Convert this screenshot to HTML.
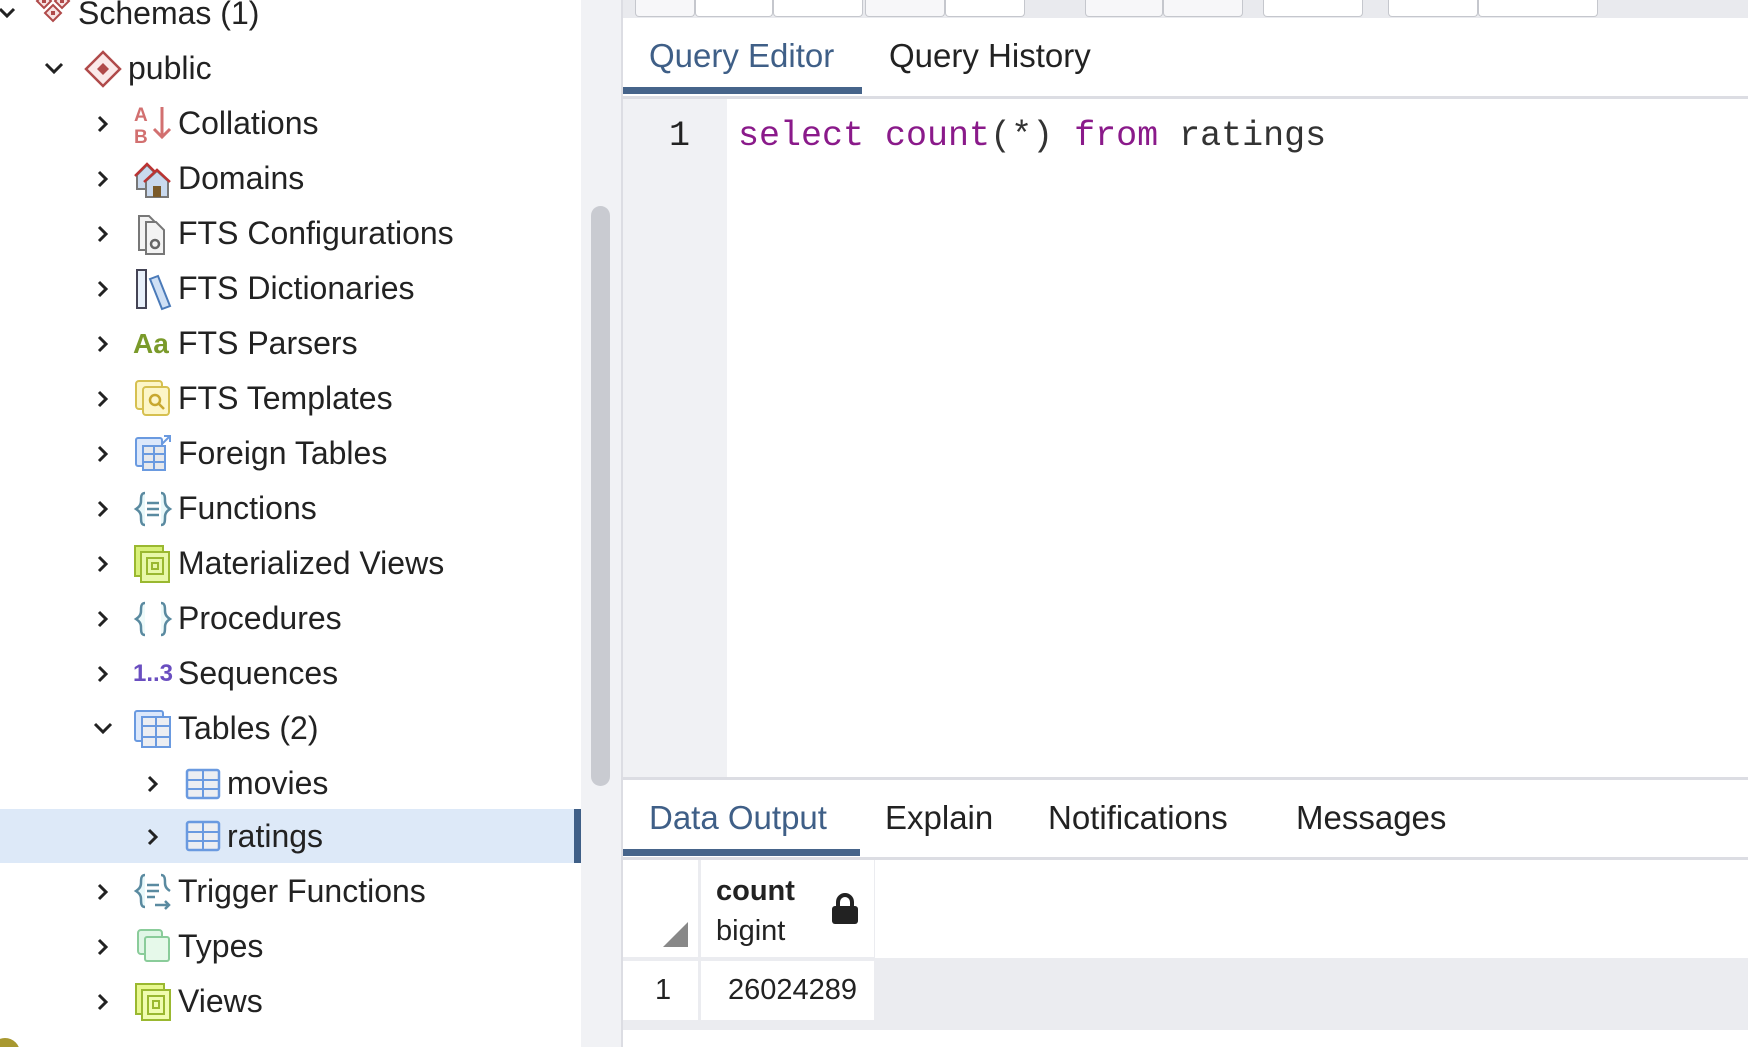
<!DOCTYPE html>
<html><head><meta charset="utf-8"><style>
*{margin:0;padding:0;box-sizing:border-box}
body{width:1748px;height:1047px;overflow:hidden;background:#fff;font-family:"Liberation Sans",sans-serif;color:#222;position:relative}
.left{position:absolute;left:0;top:0;width:581px;height:1047px;background:#fff;overflow:hidden}
.row{position:absolute;left:0;width:581px;height:55px;font-size:32px;line-height:55px}
.row .t{position:absolute;top:0}
.row svg{position:absolute}
.chev{position:absolute;top:0}
.sel{background:#dde9f8;border-right:7px solid #3f5f87}
.gut{position:absolute;left:581px;top:0;width:42px;height:1047px;background:#f1f2f5;border-right:2px solid #dcdde3}
.sb{position:absolute;left:591px;top:206px;width:19px;height:580px;background:#c9cbd1;border-radius:10px}
.tool{position:absolute;left:623px;top:0;width:1125px;height:18px;background:#e9eaee}
.tb{position:absolute;top:0;height:17px;background:#f7f7f9;border:1px solid #c5c7cd;border-top:none;border-radius:0 0 4px 4px}
.tab{position:absolute;font-size:33px;top:37px}
</style></head><body>
<div class="left">
<div class="row" style="top:-14px">
<svg class="chev" style="left:-2px;top:19px" width="18" height="16" viewBox="0 0 18 16"><path d="M2 4l7 7 7-7" stroke="#222" stroke-width="3" fill="none"/></svg>
<svg style="left:34px;top:6px" width="40" height="32" viewBox="0 0 40 32"><g fill="#f7e3e3" stroke="#b04a4a" stroke-width="2"><path d="M10 2l7 7-7 7-7-7z"/><path d="M28 2l7 7-7 7-7-7z"/><path d="M19 13l8 8-8 8-8-8z"/></g><g fill="#b04a4a"><rect x="8" y="7" width="4" height="4"/><rect x="26" y="7" width="4" height="4"/><rect x="17" y="19" width="4" height="4"/></g></svg>
<span class="t" style="left:78px">Schemas (1)</span></div>
<div class="row" style="top:41px">
<svg style="left:43px;top:20px" width="22" height="16" viewBox="0 0 22 16"><path d="M3 3l8 8 8-8" stroke="#222" stroke-width="3" fill="none"/></svg>
<svg style="left:84px;top:9px" width="38" height="38" viewBox="0 0 38 38"><path d="M19 2l17 17-17 17L2 19z" fill="#fbe9e9" stroke="#b04a4a" stroke-width="2.5"/><path d="M19 13l6 6-6 6-6-6z" fill="#b04a4a"/></svg>
<span class="t" style="left:128px">public</span></div>

<div class="row" style="top:96px"><svg style="left:96px;top:18px" width="14" height="20" viewBox="0 0 14 20"><path d="M3 3l7 7-7 7" stroke="#222" stroke-width="3" fill="none"/></svg>
<svg style="left:132px;top:7px" width="42" height="42" viewBox="0 0 42 42"><text x="2" y="18" font-family="Liberation Sans" font-weight="bold" font-size="19" fill="#d27070">A</text><text x="2" y="40" font-family="Liberation Sans" font-weight="bold" font-size="19" fill="#d27070">B</text><path d="M30 4v30M22 26l8 8 8-8" stroke="#d27070" stroke-width="3" fill="none"/></svg>
<span class="t" style="left:178px">Collations</span></div>

<div class="row" style="top:151px"><svg style="left:96px;top:18px" width="14" height="20" viewBox="0 0 14 20"><path d="M3 3l7 7-7 7" stroke="#222" stroke-width="3" fill="none"/></svg>
<svg style="left:133px;top:8px" width="40" height="40" viewBox="0 0 40 40"><path d="M4 16l10-10 10 10v14H4z" fill="#c9d9ee" stroke="#777" stroke-width="2"/><path d="M2 17L14 5l12 12" stroke="#b33" stroke-width="2.5" fill="none"/><path d="M13 22l11-10 11 10v16H13z" fill="#c9d9ee" stroke="#777" stroke-width="2"/><path d="M11 23l13-12 13 12" stroke="#b33" stroke-width="2.5" fill="none"/><rect x="20" y="27" width="8" height="11" fill="#7a5a2a"/></svg>
<span class="t" style="left:178px">Domains</span></div>

<div class="row" style="top:206px"><svg style="left:96px;top:18px" width="14" height="20" viewBox="0 0 14 20"><path d="M3 3l7 7-7 7" stroke="#222" stroke-width="3" fill="none"/></svg>
<svg style="left:136px;top:6px" width="36" height="44" viewBox="0 0 36 44"><path d="M3 4h10l6 6v28H3z" fill="#f3f3f3" stroke="#777" stroke-width="2"/><path d="M10 10h10l8 8v24H10z" fill="#f3f3f3" stroke="#777" stroke-width="2"/><circle cx="19" cy="32" r="4" fill="none" stroke="#666" stroke-width="2.5"/></svg>
<span class="t" style="left:178px">FTS Configurations</span></div>

<div class="row" style="top:261px"><svg style="left:96px;top:18px" width="14" height="20" viewBox="0 0 14 20"><path d="M3 3l7 7-7 7" stroke="#222" stroke-width="3" fill="none"/></svg>
<svg style="left:134px;top:6px" width="40" height="44" viewBox="0 0 40 44"><rect x="3" y="3" width="9" height="38" fill="#e8f0fa" stroke="#445" stroke-width="2"/><path d="M16 12l8-3 12 30-8 3z" fill="#cfe0f5" stroke="#4a7ab8" stroke-width="2"/></svg>
<span class="t" style="left:178px">FTS Dictionaries</span></div>

<div class="row" style="top:316px"><svg style="left:96px;top:18px" width="14" height="20" viewBox="0 0 14 20"><path d="M3 3l7 7-7 7" stroke="#222" stroke-width="3" fill="none"/></svg>
<span class="t" style="left:133px;color:#7a9a2a;font-weight:bold;font-size:28px">Aa</span>
<span class="t" style="left:178px">FTS Parsers</span></div>

<div class="row" style="top:371px"><svg style="left:96px;top:18px" width="14" height="20" viewBox="0 0 14 20"><path d="M3 3l7 7-7 7" stroke="#222" stroke-width="3" fill="none"/></svg>
<svg style="left:134px;top:8px" width="38" height="38" viewBox="0 0 38 38"><rect x="2" y="2" width="26" height="28" rx="3" fill="#fdf6c8" stroke="#d6c050" stroke-width="2"/><rect x="9" y="8" width="26" height="28" rx="3" fill="#fdf6c8" stroke="#d6c050" stroke-width="2"/><circle cx="21" cy="21" r="5" fill="none" stroke="#c8a830" stroke-width="2.5"/><path d="M25 25l5 5" stroke="#c8a830" stroke-width="2.5"/></svg>
<span class="t" style="left:178px">FTS Templates</span></div>

<div class="row" style="top:426px"><svg style="left:96px;top:18px" width="14" height="20" viewBox="0 0 14 20"><path d="M3 3l7 7-7 7" stroke="#222" stroke-width="3" fill="none"/></svg>
<svg style="left:134px;top:8px" width="40" height="40" viewBox="0 0 40 40"><rect x="2" y="4" width="26" height="28" rx="2" fill="#dce8fb" stroke="#6a9ae0" stroke-width="2"/><rect x="9" y="12" width="22" height="24" fill="#e6e8ec" stroke="#6a9ae0" stroke-width="2"/><path d="M9 20h22M9 28h22M20 12v24" stroke="#6a9ae0" stroke-width="2"/><path d="M28 10l8-8M30 2h6v6" stroke="#6a9ae0" stroke-width="2" fill="none"/></svg>
<span class="t" style="left:178px">Foreign Tables</span></div>

<div class="row" style="top:481px"><svg style="left:96px;top:18px" width="14" height="20" viewBox="0 0 14 20"><path d="M3 3l7 7-7 7" stroke="#222" stroke-width="3" fill="none"/></svg>
<svg style="left:133px;top:8px" width="40" height="40" viewBox="0 0 40 40"><path d="M12 4c-4 0-4 4-4 8s-2 6-5 8c3 2 5 4 5 8s0 8 4 8" fill="#e8f8fa" stroke="#5a8aa0" stroke-width="2.5"/><path d="M28 4c4 0 4 4 4 8s2 6 5 8c-3 2-5 4-5 8s0 8-4 8" fill="#e8f8fa" stroke="#5a8aa0" stroke-width="2.5"/><path d="M14 14h12M14 20h12M14 26h12" stroke="#5a8aa0" stroke-width="2.5"/></svg>
<span class="t" style="left:178px">Functions</span></div>

<div class="row" style="top:536px"><svg style="left:96px;top:18px" width="14" height="20" viewBox="0 0 14 20"><path d="M3 3l7 7-7 7" stroke="#222" stroke-width="3" fill="none"/></svg>
<svg style="left:133px;top:8px" width="40" height="40" viewBox="0 0 40 40"><rect x="2" y="2" width="28" height="30" fill="#d8f07a" stroke="#9ab830" stroke-width="2"/><rect x="8" y="8" width="28" height="30" fill="#e8f8a8" stroke="#9ab830" stroke-width="2"/><rect x="14" y="14" width="16" height="16" fill="none" stroke="#9ab830" stroke-width="2"/><rect x="19" y="19" width="6" height="6" fill="none" stroke="#9ab830" stroke-width="2"/></svg>
<span class="t" style="left:178px">Materialized Views</span></div>

<div class="row" style="top:591px"><svg style="left:96px;top:18px" width="14" height="20" viewBox="0 0 14 20"><path d="M3 3l7 7-7 7" stroke="#222" stroke-width="3" fill="none"/></svg>
<svg style="left:133px;top:8px" width="40" height="40" viewBox="0 0 40 40"><path d="M12 4c-4 0-4 4-4 8s-2 6-5 8c3 2 5 4 5 8s0 8 4 8" fill="#eefafa" stroke="#5a8aa0" stroke-width="2.5"/><path d="M28 4c4 0 4 4 4 8s2 6 5 8c-3 2-5 4-5 8s0 8-4 8" fill="#eefafa" stroke="#5a8aa0" stroke-width="2.5"/></svg>
<span class="t" style="left:178px">Procedures</span></div>

<div class="row" style="top:646px"><svg style="left:96px;top:18px" width="14" height="20" viewBox="0 0 14 20"><path d="M3 3l7 7-7 7" stroke="#222" stroke-width="3" fill="none"/></svg>
<span class="t" style="left:133px;color:#6a4ec0;font-weight:bold;font-size:24px">1..3</span>
<span class="t" style="left:178px">Sequences</span></div>

<div class="row" style="top:701px"><svg style="left:92px;top:20px" width="22" height="16" viewBox="0 0 22 16"><path d="M3 3l8 8 8-8" stroke="#222" stroke-width="3" fill="none"/></svg>
<svg style="left:133px;top:8px" width="40" height="40" viewBox="0 0 40 40"><rect x="2" y="2" width="28" height="30" rx="2" fill="#dce8fb" stroke="#6a9ae0" stroke-width="2"/><rect x="9" y="8" width="28" height="30" fill="#eceef2" stroke="#6a9ae0" stroke-width="2"/><path d="M9 17h28M9 28h28M23 8v30" stroke="#6a9ae0" stroke-width="2"/></svg>
<span class="t" style="left:178px">Tables (2)</span></div>

<div class="row" style="top:756px"><svg style="left:146px;top:18px" width="14" height="20" viewBox="0 0 14 20"><path d="M3 3l7 7-7 7" stroke="#222" stroke-width="3" fill="none"/></svg>
<svg style="left:185px;top:12px" width="36" height="32" viewBox="0 0 36 32"><rect x="2" y="2" width="32" height="28" rx="2" fill="#eceef2" stroke="#6a9ae0" stroke-width="2.5"/><path d="M2 12h32M2 21h32M18 2v28" stroke="#6a9ae0" stroke-width="2"/></svg>
<span class="t" style="left:227px">movies</span></div>

<div class="row sel" style="top:809px;height:54px;line-height:54px"><svg style="left:146px;top:18px" width="14" height="20" viewBox="0 0 14 20"><path d="M3 3l7 7-7 7" stroke="#222" stroke-width="3" fill="none"/></svg>
<svg style="left:185px;top:11px" width="36" height="32" viewBox="0 0 36 32"><rect x="2" y="2" width="32" height="28" rx="2" fill="#eceef2" stroke="#6a9ae0" stroke-width="2.5"/><path d="M2 12h32M2 21h32M18 2v28" stroke="#6a9ae0" stroke-width="2"/></svg>
<span class="t" style="left:227px">ratings</span></div>

<div class="row" style="top:864px"><svg style="left:96px;top:18px" width="14" height="20" viewBox="0 0 14 20"><path d="M3 3l7 7-7 7" stroke="#222" stroke-width="3" fill="none"/></svg>
<svg style="left:133px;top:7px" width="42" height="42" viewBox="0 0 42 42"><path d="M12 4c-4 0-4 4-4 8s-2 6-5 8c3 2 5 4 5 8s0 8 4 8" fill="#e8f8fa" stroke="#5a8aa0" stroke-width="2.5"/><path d="M28 4c4 0 4 4 4 8s2 6 5 8" fill="none" stroke="#5a8aa0" stroke-width="2.5"/><path d="M14 14h12M14 20h12M14 26h8M22 34h14M32 30l4 4-4 4" stroke="#5a8aa0" stroke-width="2.5" fill="none"/></svg>
<span class="t" style="left:178px">Trigger Functions</span></div>

<div class="row" style="top:919px"><svg style="left:96px;top:18px" width="14" height="20" viewBox="0 0 14 20"><path d="M3 3l7 7-7 7" stroke="#222" stroke-width="3" fill="none"/></svg>
<svg style="left:136px;top:9px" width="36" height="38" viewBox="0 0 36 38"><rect x="2" y="2" width="24" height="24" rx="3" fill="#e0f6e6" stroke="#8acc9a" stroke-width="2"/><rect x="9" y="9" width="24" height="24" rx="2" fill="#e6f9ea" stroke="#8acc9a" stroke-width="2"/></svg>
<span class="t" style="left:178px">Types</span></div>

<div class="row" style="top:974px"><svg style="left:96px;top:18px" width="14" height="20" viewBox="0 0 14 20"><path d="M3 3l7 7-7 7" stroke="#222" stroke-width="3" fill="none"/></svg>
<svg style="left:134px;top:8px" width="40" height="40" viewBox="0 0 40 40"><rect x="2" y="2" width="28" height="30" fill="#e8f890" stroke="#9ab830" stroke-width="2"/><rect x="8" y="8" width="28" height="30" fill="#f0fcb0" stroke="#9ab830" stroke-width="2"/><rect x="14" y="14" width="16" height="18" fill="none" stroke="#9ab830" stroke-width="2"/><rect x="19" y="19" width="6" height="7" fill="none" stroke="#9ab830" stroke-width="2"/></svg>
<span class="t" style="left:178px">Views</span></div>
<div style="position:absolute;left:-10px;top:1038px;width:30px;height:30px;border-radius:50%;background:#a89830"></div>
</div>
<div class="gut"></div><div class="sb"></div>

<div class="tool">
<div class="tb" style="left:12px;width:60px"></div><div class="tb" style="left:72px;width:78px;background:#fff"></div><div class="tb" style="left:150px;width:90px;background:#fff"></div>
<div class="tb" style="left:242px;width:80px"></div><div class="tb" style="left:322px;width:80px;background:#fff"></div>
<div class="tb" style="left:462px;width:78px"></div><div class="tb" style="left:540px;width:80px"></div>
<div class="tb" style="left:640px;width:100px;background:#fff"></div><div class="tb" style="left:765px;width:90px;background:#fff"></div><div class="tb" style="left:855px;width:120px;background:#fff"></div>
</div>

<div class="tab" style="left:649px;color:#3f5f87">Query Editor</div>
<div class="tab" style="left:889px">Query History</div>
<div style="position:absolute;left:623px;top:87px;width:239px;height:7px;background:#46648a"></div>
<div style="position:absolute;left:623px;top:96px;width:1125px;height:3px;background:#dcdde3"></div>
<div style="position:absolute;left:623px;top:99px;width:104px;height:678px;background:#f0f1f4"></div>
<div style="position:absolute;left:669px;top:116px;font-family:'Liberation Mono',monospace;font-size:35px">1</div>
<div style="position:absolute;left:738px;top:116px;font-family:'Liberation Mono',monospace;font-size:35px;white-space:pre;color:#333"><span style="color:#8a1a8a">select</span> <span style="color:#8a1a8a">count</span>(*) <span style="color:#8a1a8a">from</span> ratings</div>
<div style="position:absolute;left:623px;top:777px;width:1125px;height:3px;background:#dcdde3"></div>

<div class="tab" style="left:649px;top:799px;color:#3f5f87">Data Output</div>
<div class="tab" style="left:885px;top:799px">Explain</div>
<div class="tab" style="left:1048px;top:799px">Notifications</div>
<div class="tab" style="left:1296px;top:799px">Messages</div>
<div style="position:absolute;left:623px;top:849px;width:237px;height:7px;background:#46648a"></div>
<div style="position:absolute;left:623px;top:857px;width:1125px;height:3px;background:#dcdde3"></div>

<div style="position:absolute;left:623px;top:860px;width:1125px;height:170px;background:#ebecf0"></div>
<div style="position:absolute;left:875px;top:860px;width:873px;height:98px;background:#fff"></div>
<div style="position:absolute;left:623px;top:860px;width:75px;height:97px;background:#fff"></div>
<div style="position:absolute;left:701px;top:860px;width:173px;height:97px;background:#fff"></div>
<div style="position:absolute;left:623px;top:961px;width:75px;height:59px;background:#fff"></div>
<div style="position:absolute;left:701px;top:961px;width:173px;height:59px;background:#fff"></div>
<div style="position:absolute;left:623px;top:1030px;width:1125px;height:17px;background:#fff"></div>
<svg style="position:absolute;left:663px;top:922px" width="26" height="25"><path d="M25 0V25H0z" fill="#888"/></svg>
<div style="position:absolute;left:716px;top:875px;font-size:29px;font-weight:bold">count</div>
<div style="position:absolute;left:716px;top:915px;font-size:29px">bigint</div>
<svg style="position:absolute;left:831px;top:893px" width="28" height="32" viewBox="0 0 28 32"><path d="M7 14V9a7 7 0 0 1 14 0v5" stroke="#222" stroke-width="4" fill="none"/><rect x="1" y="13" width="26" height="18" rx="3" fill="#222"/></svg>
<div style="position:absolute;left:655px;top:974px;font-size:29px">1</div>
<div style="position:absolute;left:728px;top:974px;font-size:29px">26024289</div>
</body></html>
